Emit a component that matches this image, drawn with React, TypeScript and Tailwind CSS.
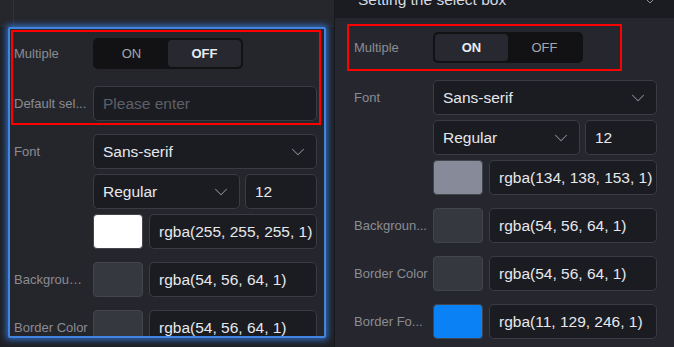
import { ChevronDown } from 'lucide-react';

const FONT = { fontFamily: '"Liberation Sans", Arial, sans-serif' };

export default function App() {
  return (
    <div className="flex h-[347px] w-[674px] overflow-hidden bg-[#1e1f23]" style={FONT}>
      {/* left: selected widget */}
      <div className="flex h-full w-[334px] flex-shrink-0 flex-col bg-[#1f2025]">
        <div className="h-[27px] bg-[#26272c]">
          <div className="ml-[13px] h-full border-l border-[#32333a]" />
        </div>
        <div className="ml-[8px] h-[311px] w-[318px] overflow-hidden rounded-[2px] border-2 border-[#4285e0] bg-[#25262c] shadow-[0_0_6px_2px_rgba(52,128,235,0.75)]">
          <div className="m-px w-[310px] border-2 border-[#ff0000] pb-[2px] pl-px pt-[6px]">
            <Row label="Multiple">
              <Toggle on={false} />
            </Row>
            <div className="mt-[17px]">
              <Row label="Default sel...">
                <Field className="w-[224px]" placeholder="Please enter" />
              </Row>
            </div>
          </div>
          <div className="pl-[4px]">
            <FontBlock color="#ffffff" value="rgba(255, 255, 255, 1)" />
            <ColorRow label="Background..." color="#363840" value="rgba(54, 56, 64, 1)" />
            <ColorRow label="Border Color" color="#363840" value="rgba(54, 56, 64, 1)" />
          </div>
        </div>
      </div>

      {/* right: property panel */}
      <div className="flex h-full flex-1 flex-col border-l border-[#18191c] bg-[#26272e]">
        <div className="flex h-[18px] items-start justify-between overflow-hidden bg-[#1b1c21]">
          <div className="-mt-[9px] pl-[23px] text-[15.5px] leading-[18px] text-[#d6d9e0]">Setting the select box</div>
          <ChevronDown className="-mt-[7px] mr-[16px] h-[16px] w-[16px] text-[#9a9ca3]" strokeWidth={1.4} />
        </div>
        <div className="ml-[12px] mt-[6px] w-[275px] border-2 border-[#ff0000] pb-[6px] pl-[5px] pt-[6px]">
          <Row label="Multiple">
            <Toggle on />
          </Row>
        </div>
        <div className="pl-[19px]">
          <FontBlock color="#868a99" value="rgba(134, 138, 153, 1)" />
          <ColorRow label="Backgroun..." color="#363840" value="rgba(54, 56, 64, 1)" />
          <ColorRow label="Border Color" color="#363840" value="rgba(54, 56, 64, 1)" />
          <ColorRow label="Border Fo..." color="#0b81f6" value="rgba(11, 129, 246, 1)" />
        </div>
      </div>
    </div>
  );
}

function Row({ label, children }: { label: string; children: React.ReactNode }) {
  return (
    <div className="flex items-center">
      <div className="w-[79px] flex-shrink-0 truncate pr-[4px] text-[13px] text-[#8a8c93]">{label}</div>
      {children}
    </div>
  );
}

function Toggle({ on }: { on: boolean }) {
  const active = 'flex items-center justify-center rounded-[4px] bg-[#282930] text-[13px] font-bold text-[#e9edf3]';
  const idle = 'flex items-center justify-center text-[13px] text-[#a5a7ad]';
  return (
    <div className="flex h-[31px] w-[150px] rounded-[5px] bg-[#121215] p-[2px]">
      <div className={`w-[73px] ${on ? active : idle}`}>ON</div>
      <div className={`flex-1 ${on ? idle : active}`}>OFF</div>
    </div>
  );
}

function Field({ className, value, placeholder, chevron }: { className: string; value?: string; placeholder?: string; chevron?: boolean }) {
  return (
    <div
      className={`flex h-[35px] min-w-0 items-center justify-between overflow-hidden rounded-[5px] border border-[#3a3c43] bg-[#1b1c22] pl-[9px] text-[15.5px] ${
        chevron ? 'pr-[7px]' : 'pr-[2px]'
      } ${className}`}
    >
      {value ? (
        <span className="whitespace-nowrap text-[#e6e8ec]">{value}</span>
      ) : (
        <span className="whitespace-nowrap text-[#5d5f67]">{placeholder}</span>
      )}
      {chevron && <ChevronDown className="h-[22px] w-[22px] flex-shrink-0 text-[#8a8c93]" strokeWidth={1.1} />}
    </div>
  );
}

function Swatch({ color }: { color: string }) {
  return <div className="h-[35px] w-[50px] flex-shrink-0 rounded-[4px] border border-[#43454c]" style={{ background: color }} />;
}

function FontBlock({ color, value }: { color: string; value: string }) {
  return (
    <div className="mt-[9px] flex items-start">
      <div className="flex h-[35px] w-[79px] flex-shrink-0 items-center text-[13px] text-[#8a8c93]">Font</div>
      <div className="flex w-[224px] flex-col gap-[5px]">
        <Field className="w-full" value="Sans-serif" chevron />
        <div className="flex gap-[5px]">
          <Field className="w-[147px]" value="Regular" chevron />
          <Field className="flex-1" value="12" />
        </div>
        <div className="flex gap-[6px]">
          <Swatch color={color} />
          <Field className="flex-1" value={value} />
        </div>
      </div>
    </div>
  );
}

function ColorRow({ label, color, value }: { label: string; color: string; value: string }) {
  return (
    <div className="mt-[13px]">
      <Row label={label}>
        <div className="flex w-[224px] gap-[6px]">
          <Swatch color={color} />
          <Field className="flex-1" value={value} />
        </div>
      </Row>
    </div>
  );
}
